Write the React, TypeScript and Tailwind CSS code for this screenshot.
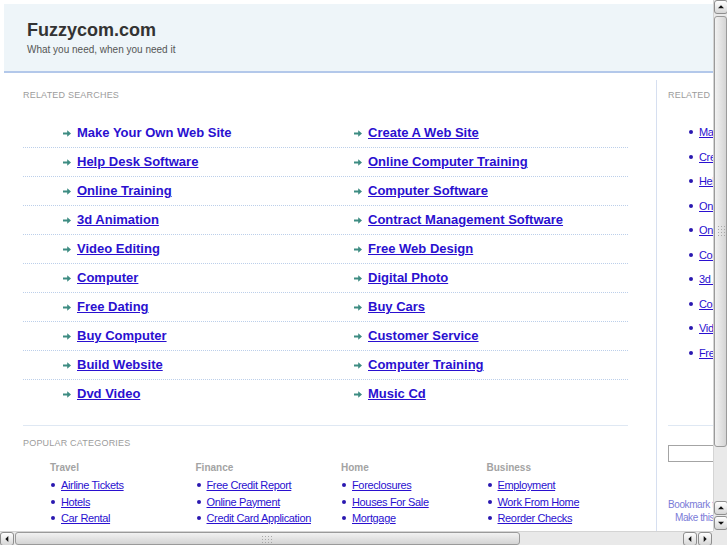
import React from "react";

const leftLinks = [
  "Make Your Own Web Site",
  "Help Desk Software",
  "Online Training",
  "3d Animation",
  "Video Editing",
  "Computer",
  "Free Dating",
  "Buy Computer",
  "Build Website",
  "Dvd Video",
];

const rightLinks = [
  "Create A Web Site",
  "Online Computer Training",
  "Computer Software",
  "Contract Management Software",
  "Free Web Design",
  "Digital Photo",
  "Buy Cars",
  "Customer Service",
  "Computer Training",
  "Music Cd",
];

const sideLinks = [
  "Make Your Own Web Site",
  "Create A Web Site",
  "Help Desk Software",
  "Online Training",
  "Online Computer Training",
  "Computer Software",
  "3d Animation",
  "Contract Management Software",
  "Video Editing",
  "Free Web Design",
];

const categories = [
  { title: "Travel", items: ["Airline Tickets", "Hotels", "Car Rental"] },
  { title: "Finance", items: ["Free Credit Report", "Online Payment", "Credit Card Application"] },
  { title: "Home", items: ["Foreclosures", "Houses For Sale", "Mortgage"] },
  { title: "Business", items: ["Employment", "Work From Home", "Reorder Checks"] },
];

const Arrow = () => (
  <svg width="8" height="7" viewBox="0 0 8 7" className="shrink-0 mr-[6px]">
    <path d="M0 2.6h4.2V0.2L8 3.5 4.2 6.8V4.4H0z" fill="#3d8c82" />
  </svg>
);

const Dot = () => <span className="inline-block w-[4px] h-[4px] rounded-full bg-[#2a18b0] mr-[6px] shrink-0" />;

const SearchLink = ({ label, plain }: { label: string; plain?: boolean }) => (
  <div className="flex items-center pl-[40px]">
    <Arrow />
    <a href="#" className={`text-[13px] font-bold text-[#2a10d0] ${plain ? "no-underline" : "underline"}`}>
      {label}
    </a>
  </div>
);

const Grip = ({ vertical }: { vertical?: boolean }) => (
  <svg width={vertical ? 10 : 16} height={vertical ? 16 : 10}>
    {Array.from({ length: 12 }).map((_, i) => {
      const a = i % 3;
      const b = Math.floor(i / 3);
      const x = vertical ? 2 + a * 3 : 2 + b * 3;
      const y = vertical ? 2 + b * 3 : 2 + a * 3;
      return <rect key={i} x={x} y={y} width="1" height="1" fill="#a8a8a8" />;
    })}
  </svg>
);

const ScrollButton = ({ dir }: { dir: "up" | "down" | "left" | "right" }) => {
  const paths = {
    up: "M3.5 8.5L7 5l3.5 3.5z",
    down: "M3.5 5.5L7 9l3.5-3.5z",
    left: "M8.5 3.5L5 7l3.5 3.5z",
    right: "M5.5 3.5L9 7l-3.5 3.5z",
  };
  return (
    <div className="w-[14px] h-[14px] shrink-0 rounded-[3px] border border-[#8e8e8e] bg-linear-to-b from-white to-[#d6d6d6] flex items-center justify-center">
      <svg width="14" height="14" viewBox="0 0 14 14">
        <path d={paths[dir]} fill="#111" />
      </svg>
    </div>
  );
};

const VScroll = () => (
  <div className="w-[14px] h-[531px] flex flex-col bg-[#e9e9e9] border-l border-[#d4d4d4]">
    <div className="h-[15px]"><ScrollButton dir="up" /></div>
    <div className="h-[431px] mt-[1px] rounded-[3px] border border-[#9a9a9a] bg-linear-to-r from-[#f2f2f2] to-[#d4d4d4] flex items-center justify-center">
      <Grip vertical />
    </div>
    <div className="flex-1" />
    <div className="h-[15px]"><ScrollButton dir="up" /></div>
    <div className="h-[15px]"><ScrollButton dir="down" /></div>
  </div>
);

const HScroll = () => (
  <div className="w-[713px] h-[14px] flex bg-[#e9e9e9] border-t border-[#d4d4d4]">
    <div className="w-[15px]"><ScrollButton dir="left" /></div>
    <div className="w-[505px] rounded-[3px] border border-[#9a9a9a] bg-linear-to-b from-[#f2f2f2] to-[#d4d4d4] flex items-center justify-center">
      <Grip />
    </div>
    <div className="flex-1" />
    <div className="w-[15px]"><ScrollButton dir="left" /></div>
    <div className="w-[15px]"><ScrollButton dir="right" /></div>
  </div>
);

const Page = () => (
  <div className="w-[900px] pt-[4px] pl-[4px]">
    {/* header */}
    <div className="h-[69px] bg-[#eef5f9] border-b-2 border-[#b3c8ea] pl-[23px] pt-[15px]">
      <div className="text-[18px] leading-[22px] font-bold text-[#333]">Fuzzycom.com</div>
      <div className="text-[10px] leading-[14px] mt-[2px] text-[#555]">What you need, when you need it</div>
    </div>

    <div className="flex mt-[7px] -ml-[4px]">
      {/* main column */}
      <div className="ml-[23px] w-[605px] shrink-0">
        <div className="pt-[9px] text-[9px] leading-[12px] text-[#9c9c9c] tracking-[0.2px]">RELATED SEARCHES</div>
        <div className="mt-[18px]">
          {leftLinks.map((l, i) => (
            <div
              key={l}
              className={`flex items-center ${i < leftLinks.length - 1 ? "h-[29px] border-b border-dotted border-[#bccfea]" : "h-[28px]"}`}
            >
              <div className="w-[291px]">
                <SearchLink label={l} plain={i === 0} />
              </div>
              <div>
                <SearchLink label={rightLinks[i]} />
              </div>
            </div>
          ))}
        </div>
        <div className="mt-[17px] border-t border-[#dfe8f3]" />
        <div className="mt-[11px] text-[9px] leading-[12px] text-[#9c9c9c] tracking-[0.2px]">POPULAR CATEGORIES</div>
        <div className="ml-[27px] mt-[12px] grid grid-cols-[145.5px_145.5px_145.5px_145.5px]">
          {categories.map((c) => (
            <div key={c.title}>
              <div className="text-[10px] leading-[14px] font-bold text-[#a3a3a3]">{c.title}</div>
              <div className="mt-[2px]">
                {c.items.map((it) => (
                  <div key={it} className="flex items-center leading-[16.5px] pl-[1px]">
                    <Dot />
                    <a href="#" className="text-[11px] tracking-[-0.35px] text-[#2a10d0] underline">{it}</a>
                  </div>
                ))}
              </div>
            </div>
          ))}
        </div>
      </div>

      {/* right sidebar */}
      <div className="ml-[28px] border-l border-[#d6dff0] pl-[11px] w-[260px] h-[460px] shrink-0">
        <div className="pt-[9px] text-[9px] leading-[12px] text-[#9c9c9c] tracking-[0.2px]">RELATED SEARCHES</div>
        <div className="mt-[19px] pl-[21px]">
          {sideLinks.map((l) => (
            <div key={l} className="flex items-center h-[24.5px]">
              <Dot />
              <a href="#" className="text-[11px] tracking-[-0.35px] text-[#2a10d0] underline whitespace-nowrap">{l}</a>
            </div>
          ))}
        </div>
        <div className="mt-[60px] border-t border-[#dfe8f3] w-[200px]" />
        <div className="mt-[19px] h-[17px] w-[150px] border border-[#a4a4a4] bg-white" />
        <div className="mt-[36px] text-[10px] leading-[13px] tracking-[-0.4px] text-[#7b7bd8]">Bookmark this page</div>
        <div className="ml-[7px] text-[10px] leading-[13px] tracking-[-0.4px] text-[#7b7bd8]">Make this your homepage</div>
      </div>
    </div>
  </div>
);

export default function App() {
  return (
    <div className="w-[727px] h-[545px] overflow-hidden flex flex-col bg-white font-['Liberation_Sans',Arial,sans-serif]">
      <div className="flex h-[531px]">
        <div className="w-[713px] h-full overflow-hidden bg-white">
          <Page />
        </div>
        <VScroll />
      </div>
      <div className="flex h-[14px]">
        <HScroll />
        <div className="w-[14px] h-[14px] bg-[#e9e9e9]" />
      </div>
    </div>
  );
}
